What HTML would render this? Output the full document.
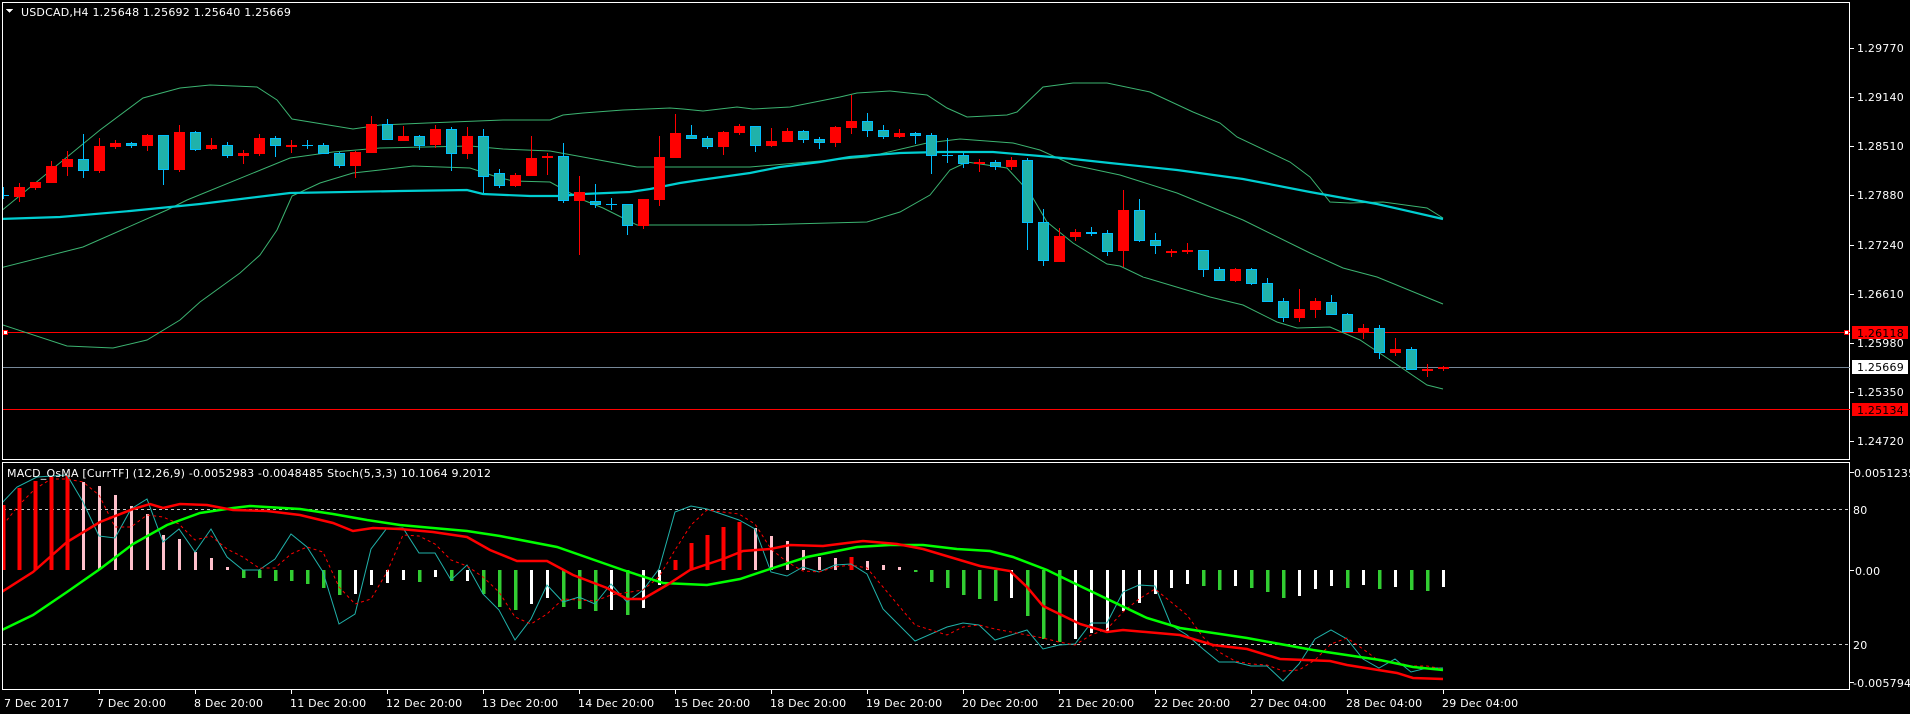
<!DOCTYPE html>
<html><head><meta charset="utf-8"><style>
html,body{margin:0;padding:0;background:#000;width:1910px;height:714px;overflow:hidden}
svg{display:block}
text{font-family:"DejaVu Sans","Liberation Sans",sans-serif;font-size:11px;letter-spacing:0.2px;fill:#fff}
</style></head><body>
<svg width="1910" height="714" viewBox="0 0 1910 714" xmlns="http://www.w3.org/2000/svg" shape-rendering="crispEdges">
<rect width="1910" height="714" fill="#000"/>
<defs>
<clipPath id="cm"><rect x="3" y="3" width="1847" height="457"/></clipPath>
<clipPath id="cl"><rect x="3" y="463" width="1847" height="227"/></clipPath>
</defs>
<rect x="2.5" y="2.5" width="1847" height="457" fill="none" stroke="#fff"/>
<rect x="2.5" y="462.5" width="1847" height="227" fill="none" stroke="#fff"/>
<g clip-path="url(#cm)">
<line x1="0" y1="332.5" x2="1850" y2="332.5" stroke="#f00"/>
<line x1="0" y1="409.5" x2="1850" y2="409.5" stroke="#f00"/>
<line x1="0" y1="367.5" x2="1850" y2="367.5" stroke="#778899"/>
<rect x="3.5" y="330.5" width="4" height="4" fill="#fff" stroke="#f00"/>
<rect x="1844.5" y="330.5" width="4" height="4" fill="#fff" stroke="#f00"/>
<g fill="none" shape-rendering="auto">
<polyline stroke="#3cb371" stroke-width="1" points="0,212 100,130 143,98 180,88 210,85 257,87 277,100 292,119 353,129 380,125 427,123 503,120 550,120 563,115 583,113 623,110 670,108 683,109 703,111 737,107 753,109 790,107 840,97 857,93 890,91 927,95 947,108 967,117 1007,115 1017,112 1043,87 1073,83 1107,83 1150,92 1193,112 1220,123 1237,137 1290,162 1310,177 1330,202 1350,203 1383,202 1427,208 1443,218"/>
<polyline stroke="#3cb371" stroke-width="1" points="0,268 83,247 167,210 187,200 290,158 333,152 380,148 470,146 503,149 550,151 583,157 637,167 657,167 750,167 867,157 927,143 960,139 1013,143 1040,150 1073,165 1120,175 1177,193 1243,220 1310,253 1343,268 1377,277 1443,304"/>
<polyline stroke="#3cb371" stroke-width="1" points="0,324 67,346 113,348 147,340 180,320 200,302 240,273 260,255 277,230 292,196 320,183 353,173 380,170 413,166 470,168 497,177 513,181 550,182 583,200 603,208 623,218 637,225 730,225 750,225 867,222 900,212 930,195 950,170 967,162 1007,168 1030,193 1047,222 1073,243 1107,264 1120,266 1143,277 1210,297 1243,305 1277,322 1297,328 1330,327 1360,340 1393,362 1427,385 1443,389"/>
<polyline stroke="#00ced1" stroke-width="2.2" points="0,219 60,217 130,211 200,204 290,193 400,191 467,190 483,194 530,196 560,196 583,194 630,192 650,189 680,183 700,180 750,173 780,167 820,162 850,157 900,153 940,152 993,152 1040,156 1073,159 1110,163 1177,170 1243,179 1310,192 1377,204 1443,219"/>
</g>
<path fill="none" stroke="#f00" d="M19.5 183V202M35.5 182V190M51.5 161V183M67.5 151V176M99.5 138V173M115.5 140V149M147.5 134V151M179.5 125V172M211.5 138V150M243.5 150V164M259.5 134V156M291.5 140V153M355.5 151V178M371.5 116V153M403.5 126V141M435.5 125V148M467.5 127V159M515.5 173V187M531.5 136V176M547.5 153V175M579.5 176V255M643.5 199V229M659.5 136V206M675.5 114V158M723.5 131V155M739.5 124V135M771.5 128V147M787.5 128V142M835.5 126V147M851.5 95V134M899.5 129V138M979.5 159V172M1011.5 157V170M1059.5 228V262M1075.5 229V241M1123.5 190V267M1171.5 249V257M1187.5 243V254M1235.5 268V282M1299.5 289V322M1315.5 298V318M1363.5 324V339M1395.5 338V356M1427.5 364V377M1443.5 366V371"/>
<path fill="#f00" d="M14 187h11V197h-11zM30 182h11V188h-11zM46 166h11V183h-11zM62 159h11V167h-11zM94 146h11V171h-11zM110 143h11V147h-11zM142 135h11V146h-11zM174 132h11V170h-11zM206 145h11V149h-11zM238 153h11V156h-11zM254 138h11V154h-11zM286 145h11V147h-11zM350 152h11V166h-11zM366 124h11V153h-11zM398 136h11V141h-11zM430 129h11V145h-11zM462 136h11V154h-11zM510 175h11V186h-11zM526 158h11V176h-11zM542 156h11V158h-11zM574 192h11V201h-11zM638 199h11V226h-11zM654 157h11V200h-11zM670 133h11V158h-11zM718 132h11V147h-11zM734 126h11V133h-11zM766 141h11V146h-11zM782 131h11V142h-11zM830 127h11V143h-11zM846 121h11V128h-11zM894 133h11V137h-11zM974 162h11V164h-11zM1006 160h11V167h-11zM1054 236h11V262h-11zM1070 232h11V237h-11zM1118 210h11V251h-11zM1166 251h11V253h-11zM1182 250h11V252h-11zM1230 269h11V281h-11zM1294 309h11V318h-11zM1310 301h11V310h-11zM1358 328h11V332h-11zM1390 349h11V353h-11zM1422 369h11V371h-11zM1438 367h11V369h-11z"/>
<path fill="none" stroke="#00bfff" d="M3.5 187V199M83.5 134V178M131.5 142V148M163.5 135V185M195.5 131V151M227.5 142V158M275.5 136V157M307.5 140V149M323.5 143V154M339.5 152V168M387.5 119V140M419.5 135V150M451.5 127V171M483.5 129V193M499.5 169V188M563.5 143V203M595.5 184V208M611.5 198V210M627.5 204V235M691.5 125V139M707.5 136V149M755.5 126V152M803.5 130V143M819.5 137V149M867.5 113V137M883.5 125V139M915.5 132V144M931.5 133V174M947.5 138V163M963.5 153V168M995.5 160V170M1027.5 158V250M1043.5 209V266M1091.5 227V236M1107.5 230V256M1139.5 199V242M1155.5 233V254M1203.5 250V277M1219.5 267V281M1251.5 268V285M1267.5 278V302M1283.5 298V322M1331.5 295V315M1347.5 313V332M1379.5 325V359M1411.5 347V370M-2 195.5h11M302 145.5h11M606 204.5h11M942 155.5h11"/>
<path fill="#20b2aa" stroke="#00bfff" d="M78.5 159.5h10V170.5h-10zM126.5 143.5h10V145.5h-10zM158.5 135.5h10V169.5h-10zM190.5 132.5h10V149.5h-10zM222.5 145.5h10V155.5h-10zM270.5 138.5h10V145.5h-10zM318.5 145.5h10V153.5h-10zM334.5 153.5h10V165.5h-10zM382.5 124.5h10V139.5h-10zM414.5 136.5h10V145.5h-10zM446.5 129.5h10V153.5h-10zM478.5 136.5h10V176.5h-10zM494.5 173.5h10V185.5h-10zM558.5 156.5h10V200.5h-10zM590.5 201.5h10V204.5h-10zM622.5 204.5h10V225.5h-10zM686.5 135.5h10V138.5h-10zM702.5 138.5h10V146.5h-10zM750.5 126.5h10V145.5h-10zM798.5 131.5h10V139.5h-10zM814.5 139.5h10V142.5h-10zM862.5 121.5h10V130.5h-10zM878.5 130.5h10V136.5h-10zM910.5 133.5h10V135.5h-10zM926.5 135.5h10V155.5h-10zM958.5 155.5h10V163.5h-10zM990.5 162.5h10V166.5h-10zM1022.5 160.5h10V222.5h-10zM1038.5 222.5h10V260.5h-10zM1086.5 232.5h10V233.5h-10zM1102.5 233.5h10V251.5h-10zM1134.5 210.5h10V240.5h-10zM1150.5 240.5h10V245.5h-10zM1198.5 250.5h10V269.5h-10zM1214.5 269.5h10V280.5h-10zM1246.5 269.5h10V283.5h-10zM1262.5 283.5h10V301.5h-10zM1278.5 301.5h10V317.5h-10zM1326.5 302.5h10V314.5h-10zM1342.5 314.5h10V331.5h-10zM1374.5 328.5h10V352.5h-10zM1406.5 349.5h10V369.5h-10z"/>
</g>
<path d="M6 9h7l-3.5 4z" fill="#fff"/>
<text x="21" y="16">USDCAD,H4  1.25648 1.25692 1.25640 1.25669</text>
<path stroke="#fff" d="M1850 48.5h4M1850 97.5h4M1850 146.5h4M1850 195.5h4M1850 245.5h4M1850 294.5h4M1850 343.5h4M1850 392.5h4M1850 441.5h4M1850 472.5h4M1850 570.5h4M1850 682.5h4"/>
<text x="1857" y="52">1.29770</text>
<text x="1857" y="101">1.29140</text>
<text x="1857" y="150">1.28510</text>
<text x="1857" y="199">1.27880</text>
<text x="1857" y="249">1.27240</text>
<text x="1857" y="298">1.26610</text>
<text x="1857" y="347">1.25980</text>
<text x="1857" y="396">1.25350</text>
<text x="1857" y="445">1.24720</text>
<rect x="1852" y="326" width="56" height="13" fill="#f00"/>
<text x="1857" y="337" style="fill:#000">1.26118</text>
<rect x="1852" y="360" width="56" height="14" fill="#fff"/>
<text x="1857" y="371" style="fill:#000">1.25669</text>
<rect x="1852" y="403" width="56" height="13" fill="#f00"/>
<text x="1857" y="414" style="fill:#000">1.25134</text>
<g clip-path="url(#cl)">
<path stroke="#c8c8c8" stroke-dasharray="3,3" d="M3 509.5H1850M3 644.5H1850"/>
<path stroke="#f00" stroke-width="4" d="M3.5 570V505M19.5 570V488M35.5 570V481M51.5 570V477M67.5 570V475M675.5 570V560M691.5 570V543M707.5 570V535M723.5 570V527M739.5 570V522M851.5 570V557"/>
<path stroke="#ffc0cb" stroke-width="3" d="M83.5 570V482M99.5 570V486M115.5 570V495M131.5 570V506M147.5 570V514M163.5 570V535M179.5 570V539M195.5 570V552M211.5 570V558M227.5 570V567M755.5 570V528M771.5 570V536M787.5 570V541M803.5 570V550M819.5 570V557M835.5 570V558M867.5 570V561M883.5 570V565M899.5 570V567"/>
<path stroke="#32cd32" stroke-width="3.5" d="M243.5 570V578M259.5 570V578M275.5 570V581M291.5 570V581M307.5 570V584M323.5 570V588M339.5 570V595M419.5 570V582M451.5 570V581M483.5 570V594M499.5 570V607M515.5 570V610M563.5 570V607M579.5 570V609M595.5 570V611M627.5 570V615M915.5 570V572M931.5 570V582M947.5 570V588M963.5 570V595M979.5 570V599M995.5 570V601M1027.5 570V616M1043.5 570V639M1059.5 570V642M1203.5 570V586M1219.5 570V590M1251.5 570V588M1267.5 570V592M1283.5 570V598M1347.5 570V588M1379.5 570V589M1411.5 570V590M1427.5 570V591"/>
<path stroke="#fff" stroke-width="3" d="M355.5 570V594M371.5 570V585M387.5 570V583M403.5 570V580M435.5 570V577M467.5 570V581M531.5 570V604M547.5 570V598M611.5 570V610M643.5 570V608M659.5 570V585M1011.5 570V598M1075.5 570V639M1091.5 570V633M1107.5 570V631M1123.5 570V611M1139.5 570V603M1155.5 570V594M1171.5 570V588M1187.5 570V584M1235.5 570V586M1299.5 570V596M1315.5 570V589M1331.5 570V586M1363.5 570V585M1395.5 570V587M1443.5 570V587"/>
<g fill="none" shape-rendering="auto">
<polyline stroke="#20b2aa" stroke-width="1" points="0,505 17,487 37,477 67,475 83,502 99,536 115,538 131,509 147,499 163,542 179,529 195,552 211,529 227,557 243,570 259,570 275,559 291,534 307,547 323,572 339,624 355,614 371,549 387,528 403,528 419,553 435,553 451,580 467,565 483,594 499,610 515,640 531,619 547,585 563,602 579,597 595,604 611,584 627,602 643,590 659,569 675,512 691,506 707,509 739,520 755,529 771,572 787,576 803,567 819,572 835,565 851,564 867,574 883,609 915,641 947,627 963,623 979,625 995,640 1027,630 1043,649 1059,645 1075,644 1091,623 1107,623 1123,592 1139,585 1155,586 1171,625 1187,635 1203,649 1219,662 1235,662 1251,666 1267,666 1283,681 1299,664 1315,639 1331,630 1347,639 1363,659 1379,668 1395,659 1411,672 1427,668 1443,668"/>
<polyline stroke="#f00" stroke-width="1" stroke-dasharray="3,3" points="3,525 19,505 35,489 51,479 67,479 83,482 99,495 115,527 131,527 147,515 163,517 179,524 195,540 211,536 227,549 243,557 259,568 275,568 291,554 307,547 323,552 339,587 355,604 371,599 387,572 403,535 419,536 435,544 451,560 467,566 483,577 499,592 515,617 531,624 547,614 563,599 595,601 611,595 643,590 659,577 675,550 691,525 707,510 739,514 755,524 771,549 787,562 803,571 819,572 835,567 851,565 867,568 883,587 915,625 947,635 963,627 979,625 995,629 1027,635 1043,638 1059,642 1075,645 1091,635 1107,629 1123,612 1139,599 1155,589 1171,602 1187,615 1203,637 1219,652 1235,661 1251,664 1267,665 1283,671 1299,670 1315,660 1331,644 1347,638 1363,649 1379,661 1395,662 1411,666 1427,666 1443,669"/>
<polyline stroke="#0f0" stroke-width="2.5" points="0,631 33,615 67,592 100,569 133,544 167,525 200,513 233,508 250,506 300,509 333,514 367,520 400,525 433,528 467,531 500,536 557,547 623,570 663,583 707,585 740,579 773,568 807,557 857,547 890,545 923,545 957,549 990,551 1013,557 1047,570 1080,586 1147,618 1180,628 1247,638 1313,650 1380,660 1413,667 1443,670"/>
<polyline stroke="#f00" stroke-width="2.5" points="0,593 33,572 67,542 100,522 133,509 150,504 163,508 180,504 207,505 233,510 267,511 300,515 333,523 353,531 373,528 400,529 433,532 467,537 490,550 517,561 547,561 573,575 607,588 627,599 643,599 667,585 690,570 723,559 743,551 770,549 790,545 823,546 863,541 897,544 923,549 980,566 1010,571 1027,587 1043,606 1080,624 1107,632 1123,630 1180,635 1213,645 1247,649 1280,659 1330,661 1347,665 1397,673 1413,678 1443,679"/>
</g>
</g>
<text x="7" y="477">MACD_OsMA [CurrTF] (12,26,9) -0.0052983 -0.0048485  Stoch(5,3,3) 10.1064 9.2012</text>
<text x="1854" y="477">0.0051235</text>
<text x="1853" y="514">80</text>
<text x="1855" y="575">0.00</text>
<text x="1853" y="649">20</text>
<text x="1853" y="687">-0.005794</text>
<path stroke="#fff" d="M99.5 690v4M195.5 690v4M291.5 690v4M387.5 690v4M483.5 690v4M579.5 690v4M675.5 690v4M771.5 690v4M867.5 690v4M963.5 690v4M1059.5 690v4M1155.5 690v4M1251.5 690v4M1347.5 690v4M1443.5 690v4"/>
<text x="4" y="707">7 Dec 2017</text>
<text x="97" y="707">7 Dec 20:00</text>
<text x="194" y="707">8 Dec 20:00</text>
<text x="290" y="707">11 Dec 20:00</text>
<text x="386" y="707">12 Dec 20:00</text>
<text x="482" y="707">13 Dec 20:00</text>
<text x="578" y="707">14 Dec 20:00</text>
<text x="674" y="707">15 Dec 20:00</text>
<text x="770" y="707">18 Dec 20:00</text>
<text x="866" y="707">19 Dec 20:00</text>
<text x="962" y="707">20 Dec 20:00</text>
<text x="1058" y="707">21 Dec 20:00</text>
<text x="1154" y="707">22 Dec 20:00</text>
<text x="1250" y="707">27 Dec 04:00</text>
<text x="1346" y="707">28 Dec 04:00</text>
<text x="1442" y="707">29 Dec 04:00</text>
</svg>
</body></html>
